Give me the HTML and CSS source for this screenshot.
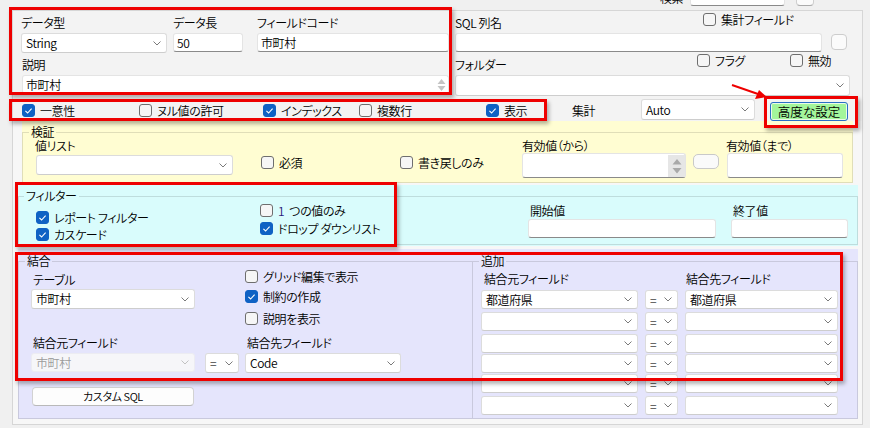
FILE: index.html
```html
<!DOCTYPE html>
<html lang="ja">
<head>
<meta charset="utf-8">
<title>フィールド設定</title>
<link rel="stylesheet" href="styles.css">
</head>
<body>
<div class="app">
  <div class="topstrip">
    <div class="topstrip-row">
      <span class="search-lbl">検索</span>
      <span class="tb search-box"></span>
      <span class="mini-btn"></span>
    </div>
  </div>

  <div class="panel">
    <div class="sec-top">
      <div class="row-a">
        <div class="f f-type">
          <div class="lbl">データ型</div>
          <div class="combo"><span>String</span><svg class="chev" viewBox="0 0 8 5" width="8" height="5"><path d="M0.5 0.5l3.5 3.5 3.5-3.5"/></svg></div>
        </div>
        <div class="f f-len">
          <div class="lbl">データ長</div>
          <div class="tb">50</div>
        </div>
        <div class="f f-code">
          <div class="lbl">フィールドコード</div>
          <div class="tb">市町村</div>
        </div>
        <div class="f f-sql">
          <div class="lbl-row">
            <span class="lbl lbl-sql">SQL 列名</span>
            <span class="cb cb-top"><span class="box"></span>集計フィールド</span>
          </div>
          <div class="tb"></div>
        </div>
        <div class="sq-btn"></div>
      </div>

      <div class="row-b">
        <div class="f f-desc">
          <div class="lbl">説明</div>
          <div class="tb ta"><span>市町村</span><svg class="spin" viewBox="0 0 11 16" width="11" height="16"><path d="M5.5 2l4 5h-8z M5.5 14l4-5h-8z"/></svg></div>
        </div>
        <div class="f f-folder">
          <div class="lbl-row">
            <span class="lbl lbl-folder">フォルダー</span>
            <span class="cb cb-flag"><span class="box"></span>フラグ</span>
            <span class="cb cb-up"><span class="box"></span>無効</span>
          </div>
          <div class="combo c-folder"><svg class="chev" viewBox="0 0 8 5" width="8" height="5"><path d="M0.5 0.5l3.5 3.5 3.5-3.5"/></svg></div>
        </div>
      </div>

      <div class="row-c">
        <span class="cb c1"><span class="box on"><svg viewBox="0 0 13 13" width="13" height="13"><path d="M3.4 6.8l2.2 2.2 4-4.4"/></svg></span>一意性</span>
        <span class="cb c2"><span class="box"></span>ヌル値の許可</span>
        <span class="cb c3"><span class="box on"><svg viewBox="0 0 13 13" width="13" height="13"><path d="M3.4 6.8l2.2 2.2 4-4.4"/></svg></span>インデックス</span>
        <span class="cb c4"><span class="box"></span>複数行</span>
        <span class="cb c5"><span class="box on"><svg viewBox="0 0 13 13" width="13" height="13"><path d="M3.4 6.8l2.2 2.2 4-4.4"/></svg></span>表示</span>
        <span class="agg-lbl">集計</span>
        <div class="combo c-auto"><span>Auto</span><svg class="chev" viewBox="0 0 8 5" width="8" height="5"><path d="M0.5 0.5l3.5 3.5 3.5-3.5"/></svg></div>
        <div class="btn-adv">高度な設定</div>
      </div>
    </div>

    <div class="sec-valid">
      <fieldset class="gb gb-valid">
        <legend>検証</legend>
        <div class="vrow">
          <div class="v-list">
            <div class="lbl14">値リスト</div>
            <div class="combo c-vlist"><svg class="chev" viewBox="0 0 8 5" width="8" height="5"><path d="M0.5 0.5l3.5 3.5 3.5-3.5"/></svg></div>
          </div>
          <span class="cb v-req"><span class="box"></span>必須</span>
          <span class="cb v-wb"><span class="box"></span>書き戻しのみ</span>
          <div class="v-from">
            <div class="lbl14">有効値（から）</div>
            <div class="tb tb-from"><span class="spin-col"><svg viewBox="0 0 12 20" width="12" height="20"><path d="M6 3l4.5 5.5h-9z M6 17.5l4.5-5.5h-9z"/></svg></span></div>
          </div>
          <div class="mini-box"></div>
          <div class="v-to">
            <div class="lbl14">有効値（まで）</div>
            <div class="tb tb-to"></div>
          </div>
        </div>
      </fieldset>
    </div>

    <div class="sec-filter">
      <fieldset class="gb gb-filter">
        <legend>フィルター</legend>
        <div class="frow">
          <div class="f-col1">
            <span class="cb"><span class="box on"><svg viewBox="0 0 13 13" width="13" height="13"><path d="M3.4 6.8l2.2 2.2 4-4.4"/></svg></span>レポート フィルター</span>
            <span class="cb"><span class="box on"><svg viewBox="0 0 13 13" width="13" height="13"><path d="M3.4 6.8l2.2 2.2 4-4.4"/></svg></span>カスケード</span>
          </div>
          <div class="f-col2">
            <span class="cb"><span class="box"></span><span class="one">1</span>つの値のみ</span>
            <span class="cb"><span class="box on"><svg viewBox="0 0 13 13" width="13" height="13"><path d="M3.4 6.8l2.2 2.2 4-4.4"/></svg></span>ドロップ ダウンリスト</span>
          </div>
          <div class="f-start">
            <div class="lbl14">開始値</div>
            <div class="tb"></div>
          </div>
          <div class="f-end">
            <div class="lbl14">終了値</div>
            <div class="tb"></div>
          </div>
        </div>
      </fieldset>
    </div>

    <div class="sec-join">
      <fieldset class="gb gb-join">
        <legend>結合</legend>
        <div class="j-row1">
          <div class="j-table">
            <div class="lbl14">テーブル</div>
            <div class="combo"><span>市町村</span><svg class="chev" viewBox="0 0 8 5" width="8" height="5"><path d="M0.5 0.5l3.5 3.5 3.5-3.5"/></svg></div>
          </div>
          <div class="j-cbs">
            <span class="cb"><span class="box"></span>グリッド編集で表示</span>
            <span class="cb"><span class="box on"><svg viewBox="0 0 13 13" width="13" height="13"><path d="M3.4 6.8l2.2 2.2 4-4.4"/></svg></span>制約の作成</span>
            <span class="cb"><span class="box"></span>説明を表示</span>
          </div>
        </div>
        <div class="j-row2">
          <div class="j-src">
            <div class="lbl14">結合元フィールド</div>
            <div class="combo disabled"><span>市町村</span><svg class="chev" viewBox="0 0 8 5" width="8" height="5"><path d="M0.5 0.5l3.5 3.5 3.5-3.5"/></svg></div>
          </div>
          <div class="combo eq j-eq"><span>=</span><svg class="chev" viewBox="0 0 8 5" width="8" height="5"><path d="M0.5 0.5l3.5 3.5 3.5-3.5"/></svg></div>
          <div class="j-dst">
            <div class="lbl14">結合先フィールド</div>
            <div class="combo"><span>Code</span><svg class="chev" viewBox="0 0 8 5" width="8" height="5"><path d="M0.5 0.5l3.5 3.5 3.5-3.5"/></svg></div>
          </div>
        </div>
        <div class="btn j-sql">カスタム SQL</div>
      </fieldset>

      <fieldset class="gb gb-add">
        <legend>追加</legend>
        <div class="a-head"><span class="a-h1">結合元フィールド</span><span>結合先フィールド</span></div>
        <div class="a-row"><div class="combo a-src"><span>都道府県</span><svg class="chev" viewBox="0 0 8 5" width="8" height="5"><path d="M0.5 0.5l3.5 3.5 3.5-3.5"/></svg></div><div class="combo eq a-eq"><span>=</span><svg class="chev" viewBox="0 0 8 5" width="8" height="5"><path d="M0.5 0.5l3.5 3.5 3.5-3.5"/></svg></div><div class="combo a-dst"><span>都道府県</span><svg class="chev" viewBox="0 0 8 5" width="8" height="5"><path d="M0.5 0.5l3.5 3.5 3.5-3.5"/></svg></div></div>
        <div class="a-row"><div class="combo a-src"><svg class="chev" viewBox="0 0 8 5" width="8" height="5"><path d="M0.5 0.5l3.5 3.5 3.5-3.5"/></svg></div><div class="combo eq a-eq"><span>=</span><svg class="chev" viewBox="0 0 8 5" width="8" height="5"><path d="M0.5 0.5l3.5 3.5 3.5-3.5"/></svg></div><div class="combo a-dst"><svg class="chev" viewBox="0 0 8 5" width="8" height="5"><path d="M0.5 0.5l3.5 3.5 3.5-3.5"/></svg></div></div>
        <div class="a-row"><div class="combo a-src"><svg class="chev" viewBox="0 0 8 5" width="8" height="5"><path d="M0.5 0.5l3.5 3.5 3.5-3.5"/></svg></div><div class="combo eq a-eq"><span>=</span><svg class="chev" viewBox="0 0 8 5" width="8" height="5"><path d="M0.5 0.5l3.5 3.5 3.5-3.5"/></svg></div><div class="combo a-dst"><svg class="chev" viewBox="0 0 8 5" width="8" height="5"><path d="M0.5 0.5l3.5 3.5 3.5-3.5"/></svg></div></div>
        <div class="a-row"><div class="combo a-src"><svg class="chev" viewBox="0 0 8 5" width="8" height="5"><path d="M0.5 0.5l3.5 3.5 3.5-3.5"/></svg></div><div class="combo eq a-eq"><span>=</span><svg class="chev" viewBox="0 0 8 5" width="8" height="5"><path d="M0.5 0.5l3.5 3.5 3.5-3.5"/></svg></div><div class="combo a-dst"><svg class="chev" viewBox="0 0 8 5" width="8" height="5"><path d="M0.5 0.5l3.5 3.5 3.5-3.5"/></svg></div></div>
        <div class="a-row"><div class="combo a-src"><svg class="chev" viewBox="0 0 8 5" width="8" height="5"><path d="M0.5 0.5l3.5 3.5 3.5-3.5"/></svg></div><div class="combo eq a-eq"><span>=</span><svg class="chev" viewBox="0 0 8 5" width="8" height="5"><path d="M0.5 0.5l3.5 3.5 3.5-3.5"/></svg></div><div class="combo a-dst"><svg class="chev" viewBox="0 0 8 5" width="8" height="5"><path d="M0.5 0.5l3.5 3.5 3.5-3.5"/></svg></div></div>
        <div class="a-row"><div class="combo a-src"><svg class="chev" viewBox="0 0 8 5" width="8" height="5"><path d="M0.5 0.5l3.5 3.5 3.5-3.5"/></svg></div><div class="combo eq a-eq"><span>=</span><svg class="chev" viewBox="0 0 8 5" width="8" height="5"><path d="M0.5 0.5l3.5 3.5 3.5-3.5"/></svg></div><div class="combo a-dst"><svg class="chev" viewBox="0 0 8 5" width="8" height="5"><path d="M0.5 0.5l3.5 3.5 3.5-3.5"/></svg></div></div>
      </fieldset>
    </div>
  </div>

  <!-- annotation overlays -->
  <div class="mark mark-1"></div>
  <div class="mark mark-2"></div>
  <div class="mark mark-3"></div>
  <div class="mark mark-4"></div>
  <div class="mark mark-5"></div>
  <svg class="arrow" viewBox="0 0 50 25" width="50" height="25">
    <path class="arrow-line" d="M6 5 L32 14"/>
    <path class="arrow-head" d="M41 17 L29 19 L33 10 Z"/>
  </svg>
</div>
</body>
</html>
```

FILE: styles.css
```css
* { box-sizing: border-box; }
html, body { margin: 0; padding: 0; }
body {
  width: 870px;
  height: 428px;
  overflow: hidden;
  background: #f0f0f0;
  font-family: "Noto Sans CJK JP", "Noto Sans", sans-serif;
  font-size: 12px;
  font-weight: 350;
  letter-spacing: -0.4px;
  color: #000;
  font-feature-settings: "palt" 1;
}
.app { position: relative; width: 870px; height: 428px; }

/* top strip (cut off search bar) */
.topstrip { height: 10px; overflow: hidden; }
.topstrip-row {
  display: flex;
  align-items: flex-end;
  height: 20px;
  margin-top: -14px;
  padding-left: 660px;
}
.search-lbl { line-height: 16px; }
.search-box { width: 95px; height: 20px; margin-left: 7px; }
.mini-btn {
  width: 18px; height: 20px; margin-left: 11px;
  background: #fbfbfb; border: 1px solid #cfcfcf; border-bottom-color: #aaa; border-radius: 4px;
}

/* main panel */
.panel {
  margin-left: 12px;
  width: 851px;
  height: 415px;
  border: 1px solid #d6d6d6;
  background: #f7f7f7;
}
.sec-top { height: 110px; padding: 2px 0 0 8px; background: #f3f3f3; }

.lbl { height: 20px; line-height: 20px; white-space: nowrap; }
.lbl14 { height: 14px; line-height: 14px; white-space: nowrap; }

/* inputs */
.tb {
  display: block;
  height: 19px;
  background: #fff;
  border: 1px solid #e4e4e4;
  border-bottom-color: #8a8a8a;
  border-radius: 3px;
  padding: 0 3px;
  line-height: 17px;
  white-space: nowrap;
}
.combo {
  display: flex;
  align-items: center;
  height: 20px;
  background: #fff;
  border: 1px solid #dcdcdc;
  border-bottom-color: #cdcdcd;
  border-radius: 3px;
  padding: 0 5px 0 4px;
  white-space: nowrap;
}
.combo span { flex: 1; line-height: 18px; }
.chev { margin-left: auto; flex: none; }
.chev path { fill: none; stroke: #7a7a7a; stroke-width: 1; }
.combo.disabled { background: #f6f6f9; border-color: #ececf2; color: #9b9b9b; }
.combo.disabled .chev path { stroke: #c2c2c2; }
.combo.eq span { color: #444; }

/* checkbox */
.cb { display: inline-flex; align-items: center; gap: 5px; height: 13px; line-height: 13px; white-space: nowrap; flex: none; }
.box {
  display: inline-block; flex: none;
  width: 13px; height: 13px;
  border: 1px solid #6e6e6e;
  border-radius: 3px;
  background: #f6f6f6;
}
.box.on { background: #0f62c4; border-color: #0f62c4; }
.box svg { display: block; margin: -1px 0 0 -1px; }
.box svg path { fill: none; stroke: #fff; stroke-width: 1.1; }
.one { color: #2a1a7a; }

/* row A */
.row-a { display: flex; height: 40px; }
.f { display: flex; flex-direction: column; flex: none; }
.f-type { width: 146px; }
.f-len { width: 70px; margin-left: 6px; }
.f-code { width: 192px; margin-left: 14px; }
.f-sql { width: 367px; margin-left: 6px; }
.lbl-row { display: flex; height: 20px; }
.lbl-sql { width: 248px; }
.sq-btn {
  width: 16px; height: 16px; margin: 21px 0 0 9px; flex: none;
  background: #fbfbfb; border: 1px solid #cdcdcd; border-radius: 4px;
}

/* row B */
.row-b { display: flex; height: 42px; margin-top: 2px; }
.f-desc { width: 428px; }
.f-desc .lbl { padding-left: 1px; }
.ta { display: flex; align-items: center; justify-content: space-between; margin-left: 1px; padding-right: 1px; }
.spin path { fill: #c4c4c4; }
.f-folder { width: 395px; margin-left: 6px; }
.lbl-folder { width: 242px; }
.cb-flag { width: 93px; margin-top: -1px; }
.cb-up { margin-top: -1px; }
.c-folder { height: 21px; }

/* row C */
.row-c { display: flex; align-items: center; height: 22px; margin-top: 2px; }
.c1 { width: 117px; margin-left: 1px; }
.c2 { width: 124px; }
.c3 { width: 96px; }
.c4 { width: 127px; }
.c5 { width: 86px; }
.agg-lbl { width: 69px; flex: none; }
.c-auto { width: 114px; height: 21px; flex: none; margin-top: -1px; }
.btn-adv {
  flex: none;
  width: 78px; height: 19px; margin: 3px 0 0 15px;
  background: #a3f59b;
  border: 1px solid #2a6fc6;
  border-radius: 3px;
  box-shadow: inset 0 0 0 1px #e9fbe6;
  text-align: center;
  line-height: 17px;
  font-size: 12.5px;
  letter-spacing: 0;
}

/* group boxes */
.gb { margin: 0; padding: 0; border: 1px solid rgba(0, 0, 0, 0.12); min-width: 0; }
.gb legend { padding: 1px 2px 0; margin-left: 6px; height: 14px; line-height: 12px; }

/* validation (yellow) */
.sec-valid { margin-left: 9px; width: 831px; height: 62px; padding-top: 4px; background: #fffdd2; }
.gb-valid { height: 58px; }
.vrow { display: flex; align-items: flex-start; }
.v-list { width: 198px; margin-left: 12px; flex: none; }
.c-vlist { width: 197px; margin: 2px 0 0 1px; }
.v-req { width: 139px; margin: 17px 0 0 28px; }
.v-wb { width: 122px; margin-top: 17px; }
.v-from { width: 164px; flex: none; }
.tb-from { height: 25px; display: flex; justify-content: flex-end; padding: 1px 0 0 0; }
.spin-col { width: 17px; height: 22px; background: #e6e6e6; display: flex; align-items: center; justify-content: center; }
.spin-col path { fill: #a9a9a9; }
.mini-box {
  flex: none; width: 26px; height: 15px; margin: 15px 0 0 7px;
  background: #fafafa; border: 1px solid #c9c9c9; border-radius: 5px;
}
.v-to { width: 117px; margin-left: 7px; flex: none; }
.tb-to { height: 25px; margin-left: 1px; }

/* filter (cyan) */
.sec-filter { margin: 2px 0 0 5px; width: 840px; height: 61px; padding-top: 4px; background: #d9fcfc; }
.gb-filter { height: 56px; }
.gb-filter legend { margin-left: 5px; }
.frow { display: flex; align-items: flex-start; }
.f-col1 { display: flex; flex-direction: column; gap: 4px; width: 224px; margin: 8px 0 0 17px; flex: none; }
.f-col2 { display: flex; flex-direction: column; gap: 5px; width: 268px; margin-top: 1px; flex: none; }
.f-start { width: 188px; margin-top: 1px; flex: none; }
.f-start .lbl14, .f-end .lbl14 { padding-left: 2px; }
.f-start .tb, .f-end .tb { margin-top: 1px; }
.f-end { width: 117px; margin: 1px 0 0 15px; flex: none; }

/* join (lavender) */
.sec-join { display: flex; margin: 3px 0 0 5px; width: 840px; height: 170px; padding-top: 5px; background: #e5e5fc; }
.gb-join { width: 454px; height: 165px; border-right: none; flex: none; }
.gb-add { width: 386px; height: 165px; flex: none; }
.j-row1 { display: flex; height: 68px; }
.j-table { width: 164px; margin-left: 12px; flex: none; }
.j-table .lbl14 { margin-top: 5px; padding-left: 2px; }
.j-table .combo { margin-top: 2px; }
.j-cbs { display: flex; flex-direction: column; margin: 2px 0 0 50px; }
.j-cbs .cb:nth-child(2) { margin-top: 7px; }
.j-cbs .cb:nth-child(3) { margin-top: 9px; }
.j-row2 { display: flex; height: 37px; }
.j-src { width: 164px; margin-left: 12px; flex: none; }
.j-src .lbl14, .j-dst .lbl14 { padding-left: 2px; }
.j-src .combo { height: 19px; margin-top: 3px; }
.j-eq { width: 34px; margin: 17px 0 0 10px; flex: none; }
.j-dst { width: 156px; margin-left: 6px; flex: none; }
.j-dst .combo { margin-top: 3px; }
.btn {
  height: 19px; background: #fdfdfd; border: 1px solid #d2d2d2; border-bottom-color: #b9b9b9;
  border-radius: 4px; text-align: center; line-height: 17px; font-size: 11px;
}
.j-sql { width: 162px; margin: 14px 0 0 13px; }

.a-head { display: flex; margin-top: 4px; height: 14px; line-height: 14px; }
.a-h1 { width: 202px; margin-left: 11px; }
.a-row { display: flex; height: 19px; margin-left: 8px; }
.a-row .combo { height: 19px; flex: none; }
.a-src { width: 157px; }
.a-eq { width: 33px; margin-left: 7px; }
.a-dst { width: 153px; margin-left: 7px; }
.gb-add .a-row:nth-child(3) { margin-top: 4px; }
.gb-add .a-row:nth-child(4) { margin-top: 3px; }
.gb-add .a-row:nth-child(5) { margin-top: 3px; }
.gb-add .a-row:nth-child(6) { margin-top: 1px; }
.gb-add .a-row:nth-child(7) { margin-top: 1px; }
.gb-add .a-row:nth-child(8) { margin-top: 3px; }

/* red annotation marks (overlay) */
.mark {
  position: absolute;
  border: 3px solid #ee0000;
  box-shadow: 2px 3px 4px rgba(0, 0, 0, 0.3);
  pointer-events: none;
}
.mark-1 { left: 9px; top: 7px; width: 443px; height: 88px; }
.mark-2 { left: 9px; top: 99px; width: 538px; height: 22px; }
.mark-3 { left: 764px; top: 96px; width: 94px; height: 32px; }
.mark-4 { left: 15px; top: 182px; width: 382px; height: 65px; }
.mark-5 { left: 15px; top: 252px; width: 828px; height: 129px; }
.arrow { position: absolute; left: 726px; top: 80px; overflow: visible; }
.arrow-line { fill: none; stroke: #ee0000; stroke-width: 2; }
.arrow-head { fill: #ee0000; }
```
